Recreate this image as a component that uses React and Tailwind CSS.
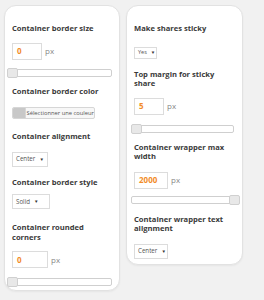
const font = { fontFamily: '"Open Sans", "Noto Sans", sans-serif' };

function Title({ children, className = "" }) {
  return (
    <div className={"text-[7.6px] leading-[9.5px] font-bold text-[#3a3a3a] " + className}>
      {children}
    </div>
  );
}

function NumInput({ value, w, className = "" }) {
  return (
    <div className={"flex items-center " + className}>
      <div
        className={"h-[17px] border border-[#dcdcdc] bg-white flex items-center pl-[4px] text-[8px] font-bold text-[#f28c28] " + w}
      >
        {value}
      </div>
      <span className="ml-[3px] text-[8px] text-[#888]">px</span>
    </div>
  );
}

function Slider({ max, className = "" }) {
  return (
    <div className={"relative h-[10px] " + className}>
      <div className="absolute inset-x-0 top-[1px] h-[8px] rounded-[2px] border border-[#cfcfcf] bg-white" />
      <div
        className={
          "absolute top-0 h-[10px] w-[11px] rounded-[2px] border border-[#d0d0d0] bg-[#e8e8e8] " +
          (max ? "right-[-3px]" : "left-0")
        }
      />
    </div>
  );
}

function Select({ label, w, h = "h-[15px]", text = "text-[6.2px]", className = "" }) {
  return (
    <div
      className={
        "flex items-center border border-[#dcdcdc] bg-white pl-[3px] text-[#555] " +
        w + " " + h + " " + text + " " + className
      }
    >
      <span>{label}</span>
      <span className="ml-[4px] text-[4.5px] text-[#333]">▼</span>
    </div>
  );
}

export default function App() {
  return (
    <div className="w-[264px] h-[300px] bg-[#f1f1f1] flex items-start gap-[6px] pl-[4px] pt-[5px]" style={font}>
      <div className="w-[116px] h-[286px] bg-white border border-[#e2e2e2] rounded-[12px] shadow-[0_1px_2px_rgba(0,0,0,0.05)] pt-[18px] pl-[7px] pr-[7px]">
        <Title>Container border size</Title>
        <NumInput value="0" w="w-[30px]" className="mt-[9px]" />
        <Slider className="mt-[8px] -ml-[5px] w-[105px]" />
        <Title className="mt-[9px]">Container border color</Title>
        <div className="mt-[11px] flex h-[12px] w-[83px] rounded-[2px] border border-[#d6d6d6] bg-[#f7f7f7] overflow-hidden">
          <div className="w-[16px] bg-[#c8c8c8]" />
          <div className="flex-1 flex items-center justify-center text-[5.8px] text-[#555] border-l border-[#d6d6d6] whitespace-nowrap">
            Sélectionner une couleur
          </div>
        </div>
        <Title className="mt-[13px]">Container alignment</Title>
        <Select label="Center" w="w-[36px]" className="mt-[10px]" />
        <Title className="mt-[11px]">Container border style</Title>
        <Select label="Solid" w="w-[38px]" className="mt-[7px]" />
        <Title className="mt-[14px]">
          Container rounded
          <br />
          corners
        </Title>
        <NumInput value="0" w="w-[36px]" className="mt-[9px]" />
        <Slider className="mt-[9px] -ml-[5px] w-[105px]" />
      </div>

      <div className="w-[117px] h-[260px] bg-white border border-[#e2e2e2] rounded-[12px] shadow-[0_1px_2px_rgba(0,0,0,0.05)] pt-[18px] pl-[7px] pr-[7px]">
        <Title>Make shares sticky</Title>
        <Select label="Yes" w="w-[23px]" h="h-[12px]" text="text-[5.5px]" className="mt-[13px]" />
        <Title className="mt-[11px]">
          Top margin for sticky
          <br />
          share
        </Title>
        <NumInput value="5" w="w-[30px]" className="mt-[9px]" />
        <Slider className="mt-[9px] -ml-[3px] w-[103px]" />
        <Title className="mt-[9px]">
          Container wrapper max
          <br />
          width
        </Title>
        <NumInput value="2000" w="w-[34px]" className="mt-[10px]" />
        <Slider max className="mt-[6px] -ml-[3px] w-[106px]" />
        <Title className="mt-[10px]">
          Container wrapper text
          <br />
          alignment
        </Title>
        <Select label="Center" w="w-[34px]" className="mt-[10px]" />
      </div>
    </div>
  );
}
